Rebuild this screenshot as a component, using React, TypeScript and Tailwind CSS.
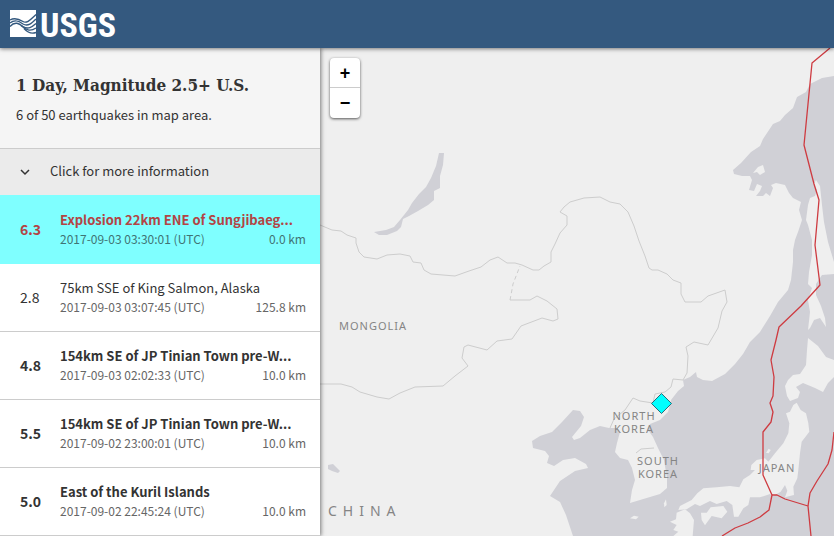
import React, { useState } from 'react';

interface Quake {
  id: number;
  magnitude: string;
  place: string;
  time: string;
  depth: string;
  significant: boolean;
}

interface QuakeRowProps {
  quake: Quake;
  selected: boolean;
  onSelect: () => void;
}

interface MapLabelProps {
  x: number;
  y: number;
  children: string;
}

const quakes: Quake[] = [
  { id: 1, magnitude: '6.3', place: 'Explosion 22km ENE of Sungjibaeg...', time: '2017-09-03 03:30:01 (UTC)', depth: '0.0 km', significant: true },
  { id: 2, magnitude: '2.8', place: '75km SSE of King Salmon, Alaska', time: '2017-09-03 03:07:45 (UTC)', depth: '125.8 km', significant: false },
  { id: 3, magnitude: '4.8', place: '154km SE of JP Tinian Town pre-W...', time: '2017-09-03 02:02:33 (UTC)', depth: '10.0 km', significant: true },
  { id: 4, magnitude: '5.5', place: '154km SE of JP Tinian Town pre-W...', time: '2017-09-02 23:00:01 (UTC)', depth: '10.0 km', significant: true },
  { id: 5, magnitude: '5.0', place: 'East of the Kuril Islands', time: '2017-09-02 22:45:24 (UTC)', depth: '10.0 km', significant: true },
];

const Logo: React.FC = () => (
  <svg width="120" height="32" viewBox="0 0 120 32" className="overflow-visible" role="img" aria-label="USGS">
    <path d="M0 2H26V29H0Z" fill="#fff" />
    <g fill="none" stroke="#34597f" strokeWidth="1.4">
      <path d="M0 12C5 9 9 11 13 13.5C17 16 21 11 26 6.5" />
      <path d="M0 15C5 11 9 13 13 16C18 19 22 15 26 11" />
      <path d="M0 18.5C5 13 9 15.5 13 18.5C18 22 22 19 26 15.5" />
      <path d="M11 17.5C16 22 20 24 26 20" />
      <path d="M14 20.5C18 25 21 26 26 24.5" />
    </g>
    <text x="30" y="29" fill="#fff" fontSize="34" fontWeight="700" fontFamily="'Roboto Condensed', 'Open Sans Condensed', 'Noto Sans Condensed', 'Noto Sans CJK SC', sans-serif">
      USGS
    </text>
  </svg>
);

const QuakeRow: React.FC<QuakeRowProps> = ({ quake, selected, onSelect }) => (
  <li>
    <button
      onClick={onSelect}
      className={`flex w-full items-center border-b pt-3.5 pr-3.5 pb-[15px] pl-5 text-left ${
        selected ? 'border-t border-[#7fffff] bg-[#7fffff] text-[#b34444]' : 'border-[#cccccc] bg-white text-[#333333]'
      }`}
    >
      <span className={`w-10 shrink-0 text-sm leading-5 ${quake.significant ? 'font-bold' : ''}`}>{quake.magnitude}</span>
      <span className="min-w-0 flex-1">
        <span className={`block truncate text-[13px] leading-5 ${quake.significant ? 'font-bold' : ''}`}>{quake.place}</span>
        <span className={`flex justify-between text-xs leading-[18px] ${selected ? 'text-[#3f7474]' : 'text-[#666666]'}`}>
          <span>{quake.time}</span>
          <span>{quake.depth}</span>
        </span>
      </span>
    </button>
  </li>
);

const MapLabel: React.FC<MapLabelProps> = ({ x, y, children }) => (
  <text x={x} y={y} textAnchor="middle" fontSize="11" className="tracking-[1px]">
    {children}
  </text>
);

const QuakeMap: React.FC = () => (
  <svg className="absolute inset-0 h-full w-full" viewBox="320 48 514 488" preserveAspectRatio="xMinYMin slice" aria-label="Earthquake map">
    {/* Sea */}
    <path
      fill="#d0d0d6"
      d="M834 76L822 78L810 84L806 92L797 97L793 108L785 115L780 121L773 124L763 139L760 146L751 152L741 163L733 170L734 174L742 176L750 176L752 180L749 190L754 191L757 184L762 186L760 191L756 196H763L766 193L770 196L773 188L771 185L776 183L785 185L789 193L793 198L801 202L799 210L802 220L798 232L795 240L793 250V262L791 280L788 290L778 302L770 316L760 332L750 342L743 354L735 364L725 374L712 381L703 380L697 377L696 372L690 377L683 380L684 386L678 391L671 400L668 412L660 420L650 424L648 430L653 437L658 448L664 460L667 478L667 488L660 494L650 497L640 500L630 503L632 490L635 480L632 468L628 460L620 458L615 452L617 443L620 432L617 428L609 428L600 426L590 430L580 438L574 440L572 437L581 426L584 417L580 411L573 410L562 422L552 432L540 436L532 441L533 448L545 451L549 456L547 463L554 466L563 460L575 458L586 464L588 468L575 471L560 481L550 496L560 502L566 515L571 530L573 536L573 900H1200V76Z"
    />
    {/* Sakhalin and Hokkaido */}
    <g fill="#efefef">
      <path d="M816 180L820 186L822 205L824 222L828 242L834 262V274L822 275L816 284L816 295L821 306L825 318L826 327L820 318L814 320L810 328L808 330L810 312L808 300L812 288L808 284L809 272L812 255L812 240L808 225L806 220L808 205L810 198L815 196L817 190L814 184Z" />
      <path d="M808 338L818 346L826 357L834 360V377L828 383L823 392L815 388L803 383L796 387L800 392L798 398L790 401L787 396L785 386L788 380L793 375L800 374L806 365L807 350Z" />
      <path d="M758 167L763 165L765 172L760 175L757 172L753 173Z" />
    </g>
    {/* Honshu, Shikoku, Kyushu and small islands */}
    <g fill="#efefef" transform="translate(530 370) scale(.33333)">
      <path d="M768 130L780 125L790 105L800 98L812 120L828 130L835 160L838 185L815 215L810 250L805 300L802 325L790 350L792 375L765 382L772 362L765 345L752 365L730 378L720 372L690 382L660 382L655 405L640 415L625 440L612 440L607 405L590 393L560 402L540 393L510 408L495 402L470 418L445 420L450 408L485 390L502 370L520 355L560 352L600 348L628 352L640 328L660 315L675 300L662 300L664 285L680 270L705 265L715 275L735 250L760 220L775 190L778 160Z" />
      <path d="M513 428L530 428L542 412L580 408L592 425L575 445L545 438L525 466L515 450Z" />
      <path d="M440 428L465 418L480 430L492 450L488 498H430L445 485L430 480L440 465L420 455L438 448Z" />
      <path d="M300 445L312 437L326 440L318 448Z" />
      <path d="M402 400L408 388L410 405L403 412Z" />
      <path d="M708 248L716 236L722 240L716 250Z" />
    </g>
    {/* Lakes */}
    <path
      fill="#d0d0d6"
      d="M439 153L444 153L443 165L440 176L440 188L434 191L434 200L428 205L418 211L409 216L403 219L401 227L397 231L387 235L379 235L374 232L386 230L394 227L400 220L408 210L412 203L419 194L426 187L431 178L436 166Z"
    />
    <path fill="#d0d0d6" d="M328 465L333 464L340 471L338 473L332 471L328 469Z" />
    {/* Country borders */}
    <g fill="none" stroke="#cdcdcd">
      <path d="M320 225L332 230L341 231L347 235L356 238L356 243L359 252L364 257L377 259L387 255L400 254L410 256L413 262L421 263L424 270L431 274L443 275L455 276L469 271L481 267L490 260L498 257L507 263H515L522 265L533 270H539L544 266L551 262V252L555 244L560 233L567 225L567 216L560 212L564 207L570 202L584 198L600 197L610 202L620 204L628 212L634 226L639 241L645 256L649 268L652 270H658L667 274L673 280L681 283V294L685 302L701 302L708 296L725 290L727 302L722 311L718 328L708 345L694 342L686 347L688 356L687 373L683 380L673 379L671 387L665 392L655 394L653 403L640 401L633 398L625 410L614 419L610 428" />
      <path d="M320 384H341L352 387L360 392L377 397L389 399L400 393L415 387L443 386L455 376L468 366L462 358L464 347L468 345L487 350L497 341L512 339L521 326L542 318L553 321L558 319L557 309L547 301L537 296L530 300L510 300" />
      <path d="M510 300L511 295L513 284L520 266" strokeDasharray="4 3" />
      <path d="M636 453L641 449L654 448" />
    </g>
    {/* Plate boundaries */}
    <g fill="none" stroke="#ce3b41" strokeWidth="1.3" strokeLinejoin="round">
      <path d="M830 48L812 63L804 145L814 184L819 200L815 245L820 285L801 306L779 327L776 340L771 360L774 377L773 396L770 403L773 412L771 422L763 432V475L772 495L769 510L760 517L748 523L735 528L722 536" />
      <path d="M772 495L777 495L785 499L808 506L811 536" />
      <path d="M808 506L810 493L817 481L828 464L832 450L834 432" />
    </g>
    {/* Place names */}
    <g fill="#858585" fontFamily="'Noto Sans', sans-serif">
      <MapLabel x={373} y={330}>MONGOLIA</MapLabel>
      <MapLabel x={634} y={420}>NORTH</MapLabel>
      <MapLabel x={634} y={433}>KOREA</MapLabel>
      <MapLabel x={658} y={465}>SOUTH</MapLabel>
      <MapLabel x={658} y={478}>KOREA</MapLabel>
      <MapLabel x={777} y={472}>JAPAN</MapLabel>
      <text x="328" y="516" fontSize="14" className="tracking-[6px]">CHINA</text>
    </g>
    <path d="M661.5 393.5L671.5 403.5L661.5 413.5L651.5 403.5Z" fill="#00ffff" stroke="#2a6c78" />
  </svg>
);

export default function App() {
  const [selectedId, setSelectedId] = useState(1);

  return (
    <div className="flex h-screen flex-col overflow-hidden bg-[#efefef] font-['Noto_Sans_CJK_SC',sans-serif] text-[#333333]">
      <header className="relative z-20 flex h-12 shrink-0 items-center bg-[#34597f] px-2.5 shadow-[0_1px_4px_rgba(0,0,0,0.5)]">
        <a href="#home">
          <Logo />
        </a>
      </header>

      <div className="flex min-h-0 flex-1">
        {/* Earthquake list */}
        <aside className="relative z-10 w-80 shrink-0 overflow-hidden bg-white shadow-[1px_0_4px_rgba(0,0,0,0.5)]">
          <div className="border-b border-[#cccccc] bg-[#f5f5f5] px-4 pt-[25px] pb-[23px]">
            <h1 className="font-['DejaVu_Serif_Condensed','DejaVu_Serif',serif] text-[17px] leading-6 font-bold">1 Day, Magnitude 2.5+ U.S.</h1>
            <p className="mt-2 text-[13px] leading-5">6 of 50 earthquakes in map area.</p>
          </div>
          <button className="flex w-full items-center gap-[18px] bg-[#ebebeb] px-[18px] pt-3 pb-3.5 text-left text-[13px] leading-5">
            <svg width="14" height="14" viewBox="0 0 14 14" fill="none" stroke="#333333" strokeWidth="1.5">
              <path d="M3 6L7 10L11 6" />
            </svg>
            Click for more information
          </button>
          <ul>
            {quakes.map((quake) => (
              <QuakeRow key={quake.id} quake={quake} selected={quake.id === selectedId} onSelect={() => setSelectedId(quake.id)} />
            ))}
          </ul>
        </aside>

        <main className="relative flex-1 overflow-hidden">
          <QuakeMap />
          {/* Zoom control */}
          <div className="absolute top-2.5 left-2.5 flex w-[30px] flex-col overflow-hidden rounded bg-white font-['Liberation_Sans',sans-serif] text-lg font-bold text-black shadow-[0_1px_3px_rgba(0,0,0,0.65)]">
            <button aria-label="Zoom in" className="h-[30px] border-b border-[#cccccc] leading-6">+</button>
            <button aria-label="Zoom out" className="h-[30px] leading-6">−</button>
          </div>
        </main>
      </div>
    </div>
  );
}
